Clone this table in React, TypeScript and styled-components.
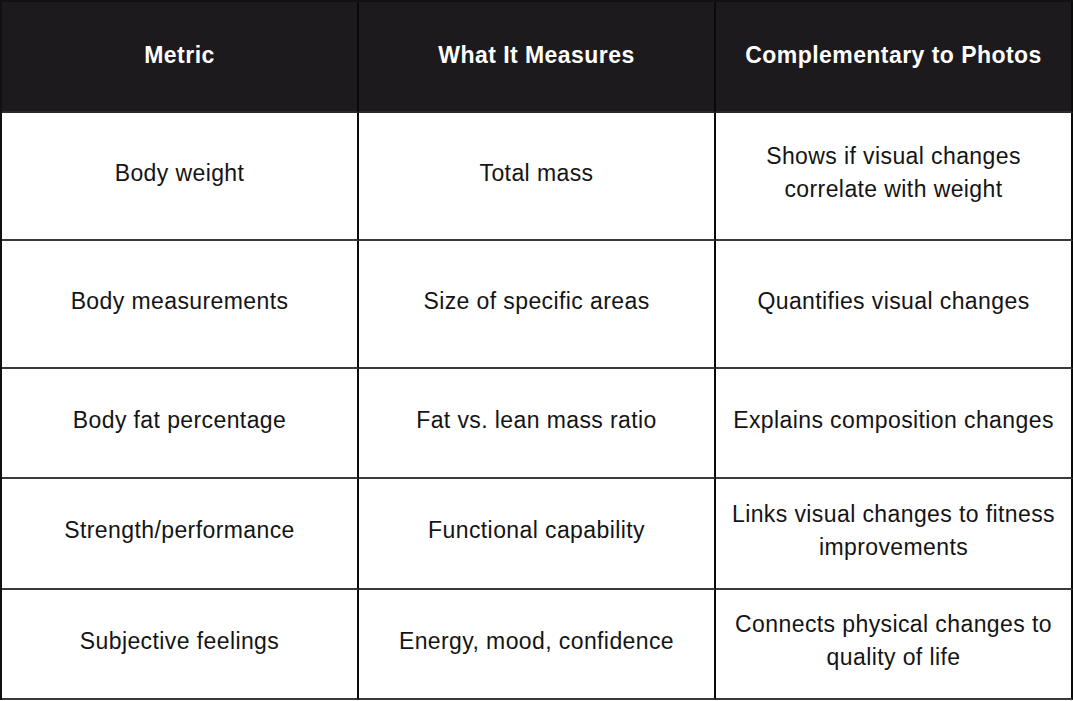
import { createGlobalStyle } from 'styled-components';
import styled from 'styled-components';

const GlobalStyle = createGlobalStyle`
  html, body {
    margin: 0;
    padding: 0;
    background: #ffffff;
  }
  body {
    font-family: "Liberation Sans", Arial, Helvetica, sans-serif;
    color: #111111;
  }
`;

const rows = [
  { metric: 'Body weight', measures: 'Total mass', photos: 'Shows if visual changes correlate with weight' },
  { metric: 'Body measurements', measures: 'Size of specific areas', photos: 'Quantifies visual changes' },
  { metric: 'Body fat percentage', measures: 'Fat vs. lean mass ratio', photos: 'Explains composition changes' },
  { metric: 'Strength/performance', measures: 'Functional capability', photos: 'Links visual changes to fitness improvements' },
  { metric: 'Subjective feelings', measures: 'Energy, mood, confidence', photos: 'Connects physical changes to quality of life' },
];

const rowHeights = [128, 128, 110, 111, 110];

const Table = styled.div`
  display: grid;
  grid-template-columns: 357px 357px 357px;
  width: 1073px;
  box-sizing: border-box;
  border-top: 2px solid #111;
  border-left: 2px solid #111;
`;

const Cell = styled.div<{ header?: boolean; height: number }>`
  box-sizing: border-box;
  height: ${({ height }) => height}px;
  display: flex;
  align-items: center;
  justify-content: center;
  text-align: center;
  padding: 0 12px ${({ header }) => (header ? '2px' : '6px')};
  border-right: 2px solid #0a0a0a;
  border-bottom: 2px solid ${({ header }) => (header ? '#2a2a2a' : '#3a3a3a')};
  background: ${({ header }) => (header ? '#1c1a1d' : '#ffffff')};
  color: ${({ header }) => (header ? '#ffffff' : '#141414')};
  font-size: 23px;
  font-weight: ${({ header }) => (header ? 700 : 400)};
  letter-spacing: ${({ header }) => (header ? '0.45px' : '0.4px')};
  line-height: 33px;
`;

export default function App() {
  return (
    <>
      <GlobalStyle />
      <Table>
        <Cell header height={111}>Metric</Cell>
        <Cell header height={111}>What It Measures</Cell>
        <Cell header height={111}>Complementary to Photos</Cell>
        {rows.map((row, i) => (
          <>
            <Cell key={row.metric + 'a'} height={rowHeights[i]}>{row.metric}</Cell>
            <Cell key={row.metric + 'b'} height={rowHeights[i]}>{row.measures}</Cell>
            <Cell key={row.metric + 'c'} height={rowHeights[i]}>{row.photos}</Cell>
          </>
        ))}
      </Table>
    </>
  );
}
